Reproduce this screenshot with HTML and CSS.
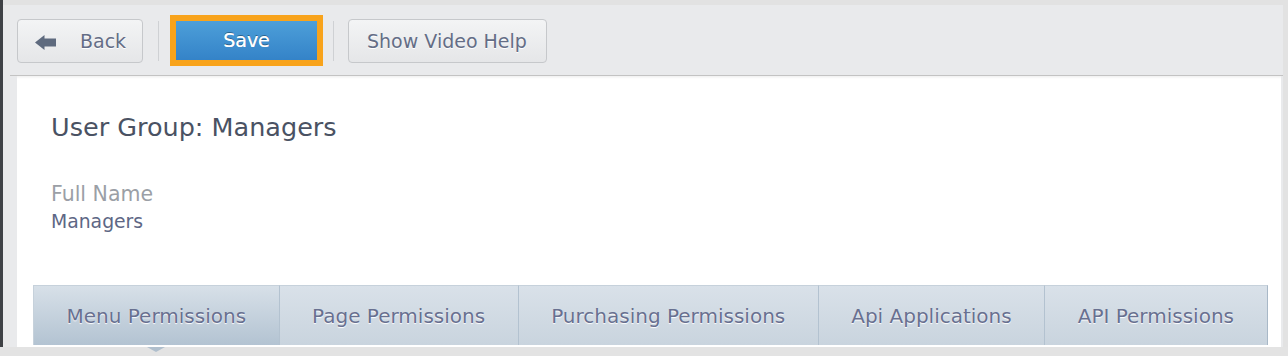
FILE: index.html
```html
<!DOCTYPE html>
<html>
<head>
<meta charset="utf-8">
<link rel="stylesheet" href="styles.css">
</head>
<body>
<div class="app">
  <div class="rail"></div>
  <div class="gutter"></div>
  <div class="main">
    <div class="toolbar">
      <button class="btn btn-back">
        <svg class="arrow" width="21" height="15" viewBox="0 0 21 15"><path d="M0 7.5 L9.5 0 L9.5 3.5 L21 3.5 L21 11.5 L9.5 11.5 L9.5 15 Z" fill="#5e6a7e"/></svg>
        <span>Back</span>
      </button>
      <div class="sep"></div>
      <button class="btn btn-save">Save</button>
      <div class="sep sep2"></div>
      <button class="btn btn-help">Show Video Help</button>
    </div>
    <div class="panel">
      <h1 class="title">User Group: Managers</h1>
      <div class="field-label">Full Name</div>
      <div class="field-value">Managers</div>
      <div class="tabs">
        <div class="tab active">Menu Permissions</div>
        <div class="tab">Page Permissions</div>
        <div class="tab">Purchasing Permissions</div>
        <div class="tab">Api Applications</div>
        <div class="tab last">API Permissions</div>
      </div>
    </div>
  </div>
</div>
<div class="bottom"></div>
</body>
</html>
```
FILE: styles.css
```css
html, body {
  margin: 0;
  padding: 0;
  width: 1288px;
  height: 356px;
  overflow: hidden;
  background: #e2e2e2;
  font-family: "DejaVu Sans", Verdana, sans-serif;
}
.app {
  display: flex;
  height: 347px;
}
.rail {
  width: 3px;
  background: #3e4043;
  flex: none;
}
.gutter {
  width: 7px;
  background: #e8e8e8;
  flex: none;
  margin-top: 5px;
}
.main {
  width: 1273px;
  margin-top: 5px;
  background: #e9eaec;
  display: flex;
  flex-direction: column;
  flex: none;
}
.toolbar {
  height: 70px;
  border-bottom: 1px solid #c3c3c3;
  display: flex;
  align-items: center;
  padding-left: 7px;
  box-sizing: content-box;
}
.btn {
  font-family: "DejaVu Sans", Verdana, sans-serif;
  font-size: 19px;
  margin: 0;
  cursor: pointer;
}
.btn-back, .btn-help {
  height: 44px;
  margin-top: 2px;
  border: 1px solid #c6c8cb;
  border-radius: 4px;
  background: linear-gradient(#f3f4f5, #e5e6e8);
  color: #646d86;
  text-shadow: 0 1px 0 #fff;
  display: flex;
  align-items: center;
}
.btn-back {
  width: 126px;
  padding: 0 0 0 17px;
}
.btn-back .arrow {
  margin-top: 2px;
  margin-right: 24px;
}
.sep {
  width: 1px;
  height: 40px;
  background: #cfd1d4;
  margin-left: 15px;
  margin-top: 2px;
}
.btn-save {
  width: 141px;
  height: 39px;
  margin-left: 17px;
  border: none;
  border-radius: 0;
  outline: 6px solid #f8a31b;
  background: linear-gradient(#4d9fd9, #3483c8);
  color: #fff;
  text-shadow: 0 -1px 0 rgba(0,0,0,0.35), 0 0 0.4px #fff;
  padding: 0;
}
.sep2 {
  margin-left: 16px;
}
.btn-help {
  width: 199px;
  margin-left: 14px;
  padding: 0 0 0 18px;
}
.panel {
  background: #fff;
  margin-left: 7px;
  margin-right: 2px;
  height: 271px;
  padding: 36px 0 0 34px;
  box-sizing: border-box;
  box-shadow: inset 0 4px 3px -3px rgba(0,0,0,0.08);
}
.title {
  margin: 0;
  font-size: 25.5px;
  font-weight: normal;
  line-height: 30px;
  color: #4a5263;
}
.field-label {
  margin-top: 40px;
  font-size: 20.5px;
  line-height: 24px;
  color: #9b9fa6;
}
.field-value {
  margin-top: 5px;
  font-size: 18.8px;
  line-height: 22px;
  color: #5e6785;
}
.tabs {
  margin-top: 52px;
  margin-left: -18px;
  display: flex;
  height: 60px;
}
.tab {
  position: relative;
  height: 60px;
  box-sizing: border-box;
  padding: 0 32.5px;
  display: flex;
  align-items: center;
  font-size: 20px;
  color: #687090;
  text-shadow: 0 1px 1px #fff;
  background: linear-gradient(#d9e1e9, #c9d4de);
  border-top: 1px solid #c6d1db;
  border-right: 1px solid #b3c2d0;
  white-space: nowrap;
}
.tab.active {
  background: linear-gradient(#d7e0e8, #b3c3d2);
  border-left: 1px solid #c6d1db;
}
.tab.active::after {
  content: "";
  position: absolute;
  left: 50%;
  margin-left: -9px;
  bottom: -7px;
  border-left: 9px solid transparent;
  border-right: 9px solid transparent;
  border-top: 5px solid #b0bfcd;
}
.tab.last {
  border-right-color: #a8b8c7;
}
.bottom {
  height: 9px;
  background: #e3e3e3;
}
```
